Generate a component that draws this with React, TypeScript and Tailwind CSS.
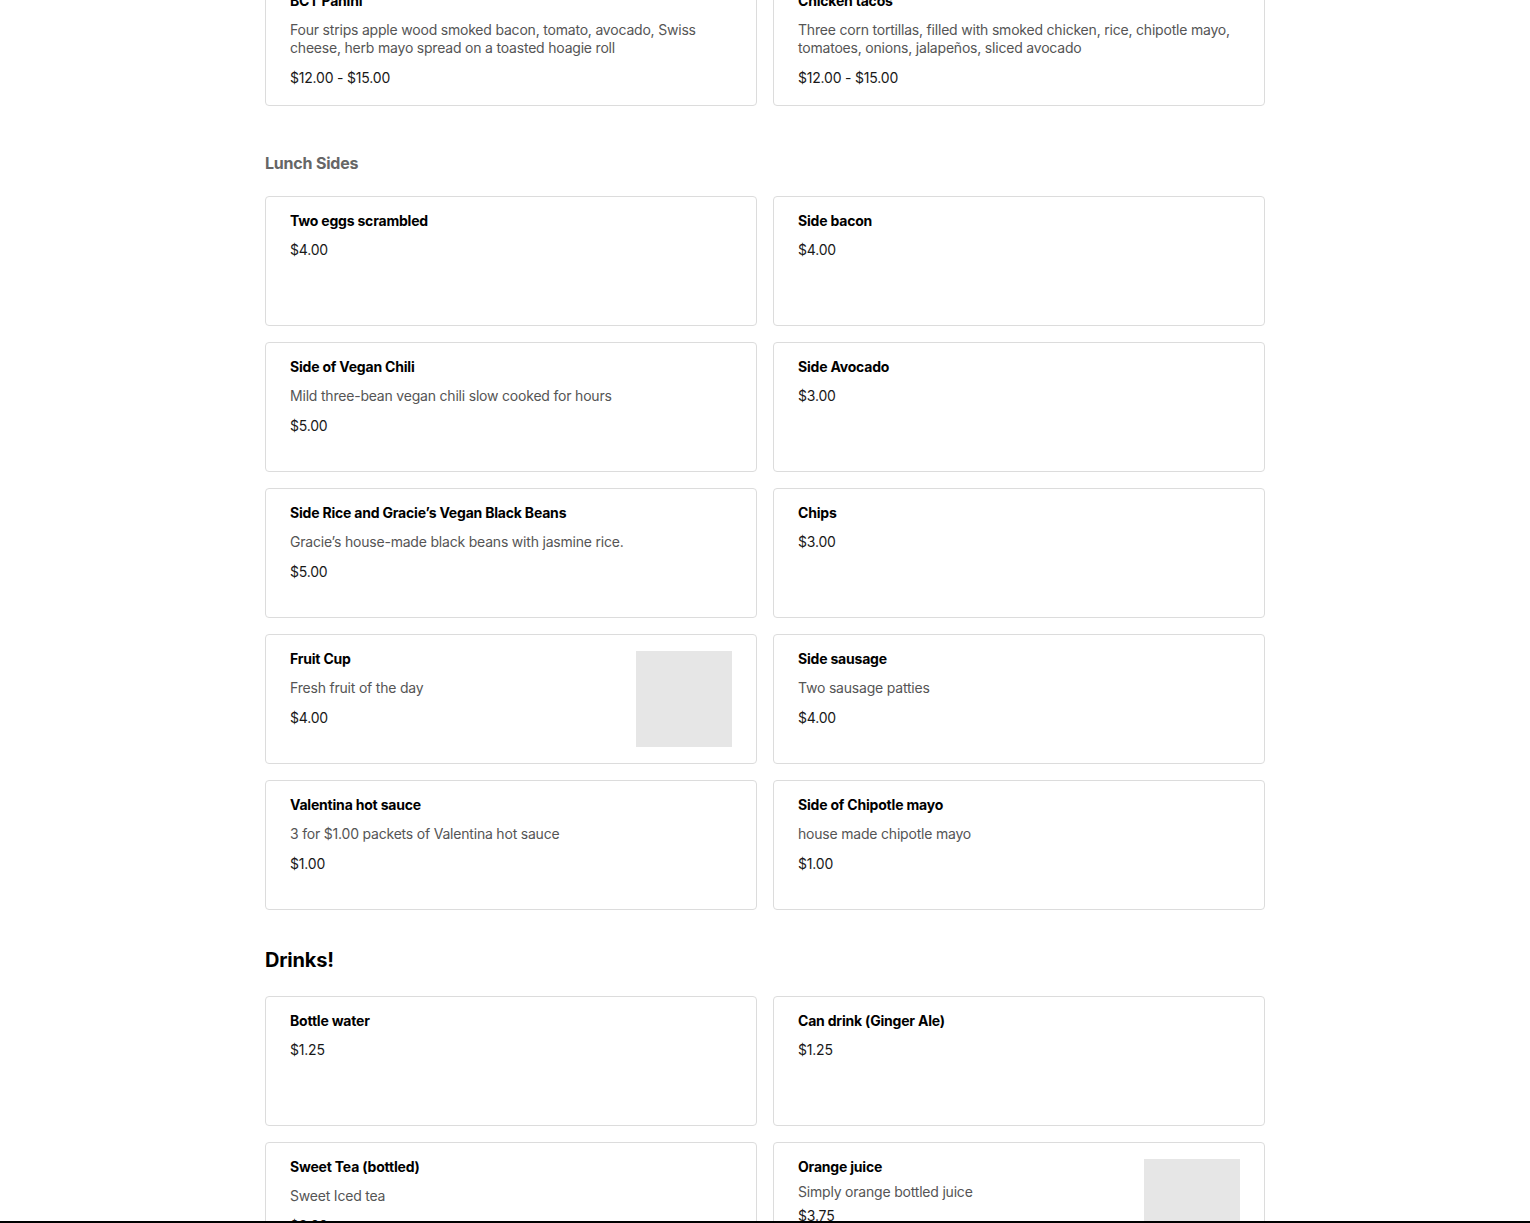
import React from "react";

type Item = {
  name: string;
  desc?: string;
  price: string;
  image?: boolean;
  compact?: boolean;
};

const prev: Item[] = [
  {
    name: "BCT Panini",
    desc: "Four strips apple wood smoked bacon, tomato, avocado, Swiss cheese, herb mayo spread on a toasted hoagie roll",
    price: "$12.00 - $15.00",
  },
  {
    name: "Chicken tacos",
    desc: "Three corn tortillas, filled with smoked chicken, rice, chipotle mayo, tomatoes, onions, jalapeños, sliced avocado",
    price: "$12.00 - $15.00",
  },
];

const sides: Item[] = [
  { name: "Two eggs scrambled", price: "$4.00" },
  { name: "Side bacon", price: "$4.00" },
  { name: "Side of Vegan Chili", desc: "Mild three-bean vegan chili slow cooked for hours", price: "$5.00" },
  { name: "Side Avocado", price: "$3.00" },
  { name: "Side Rice and Gracie’s Vegan Black Beans", desc: "Gracie’s house-made black beans with jasmine rice.", price: "$5.00" },
  { name: "Chips", price: "$3.00" },
  { name: "Fruit Cup", desc: "Fresh fruit of the day", price: "$4.00", image: true },
  { name: "Side sausage", desc: "Two sausage patties", price: "$4.00" },
  { name: "Valentina hot sauce", desc: "3 for $1.00 packets of Valentina hot sauce", price: "$1.00" },
  { name: "Side of Chipotle mayo", desc: "house made chipotle mayo", price: "$1.00" },
];

const drinks: Item[] = [
  { name: "Bottle water", price: "$1.25" },
  { name: "Can drink (Ginger Ale)", price: "$1.25" },
  { name: "Sweet Tea (bottled)", desc: "Sweet Iced tea", price: "$3.00" },
  { name: "Orange juice", desc: "Simply orange bottled juice", price: "$3.75", image: true, compact: true },
];

function Card({ item }: { item: Item }) {
  return (
    <div className="flex min-h-[130px] rounded-[4px] border border-[#dcdcdc] bg-white px-6 py-4">
      <div className="flex min-w-0 flex-1 flex-col">
        <div className="mt-[1px] text-[14px] font-bold leading-[14px] text-black">{item.name}</div>
        {item.desc && (
          <div
            className={
              item.compact
                ? "mt-[9px] text-[14px] leading-[18px] text-[#555555]"
                : "mt-[13px] text-[14px] leading-[18px] text-[#555555]"
            }
          >
            {item.desc}
          </div>
        )}
        <div
          className={
            item.desc
              ? item.compact
                ? "mt-[5px] text-[14px] leading-[20px] text-[#191919]"
                : "mt-[11px] text-[14px] leading-[20px] text-[#191919]"
              : "mt-[12px] text-[14px] leading-[20px] text-[#191919]"
          }
        >
          {item.price}
        </div>
      </div>
      {item.image && <div className="ml-4 h-[96px] w-[96px] shrink-0 bg-[#e6e6e6]" />}
    </div>
  );
}

function Grid({ items }: { items: Item[] }) {
  return (
    <div className="grid grid-cols-2 gap-4">
      {items.map((it) => (
        <Card key={it.name} item={it} />
      ))}
    </div>
  );
}

export default function App() {
  return (
    <div
      className="h-[1223px] overflow-hidden bg-white tracking-[-0.2px]"
      style={{ fontFamily: "Inter, 'Noto Sans', sans-serif" }}
    >
      <div className="mx-auto -mt-[24px] w-[1000px]">
        <Grid items={prev} />
        <h3 className="mt-[47px] text-[16px] font-bold leading-[20px] text-[#666666]">Lunch Sides</h3>
        <div className="mt-[23px]">
          <Grid items={sides} />
        </div>
        <h2 className="mt-[38px] text-[20px] font-bold leading-[24px] text-black">Drinks!</h2>
        <div className="mt-[24px]">
          <Grid items={drinks} />
        </div>
      </div>
      <div className="fixed bottom-0 left-0 right-0 h-[2px] bg-black" />
    </div>
  );
}
